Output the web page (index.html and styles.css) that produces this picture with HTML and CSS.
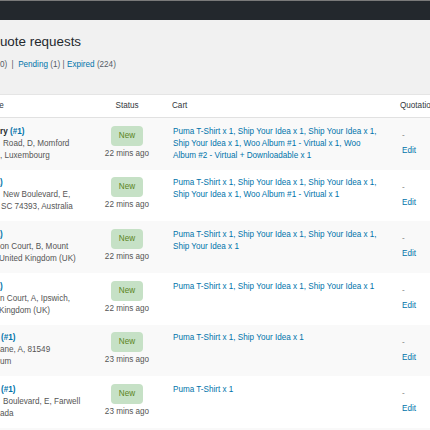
FILE: index.html
```html
<!DOCTYPE html>
<html lang="en">
<head>
<meta charset="utf-8">
<title>Quote requests</title>
<link rel="stylesheet" href="styles.css">
</head>
<body>
<div class="adminbar"></div>
<div class="head">
  <h1 class="title">Quote requests</h1>
  <ul class="filters">
    <li class="first"><span class="count">0)</span> <span class="sep">|</span></li>
    <li><a href="#">Pending</a> <span class="count">(1)</span> <span class="sep">|</span></li>
    <li><a href="#">Expired</a> <span class="count">(224)</span></li>
  </ul>
</div>
<table class="list">
  <colgroup>
    <col class="c-name"><col class="c-status"><col class="c-cart"><col class="c-quote">
  </colgroup>
  <thead>
    <tr>
      <th class="name"><span class="cut-head">Name</span></th>
      <th class="status">Status</th>
      <th class="cart">Cart</th>
      <th class="quote">Quotation</th>
    </tr>
  </thead>
  <tbody>
    <tr>
      <td class="name">
        <div class="l1"><b>ry</b> <a href="#">(#1)</a></div>
        <div class="pad3">Road, D, Momford</div>
        <div>, Luxembourg</div>
      </td>
      <td class="status"><div class="st"><span class="badge">New</span><span>22 mins ago</span></div></td>
      <td class="cart"><a href="#">Puma T-Shirt x 1, Ship Your Idea x 1, Ship Your Idea x 1, Ship Your Idea x 1, Woo Album #1 - Virtual x 1, Woo Album #2 - Virtual + Downloadable x 1</a></td>
      <td class="quote"><div class="dash">-</div><a class="edit" href="#">Edit</a></td>
    </tr>
    <tr>
      <td class="name">
        <div class="l1"><a class="cut-id" href="#">(#1)</a></div>
        <div class="pad3">New Boulevard, E,</div>
        <div class="pad1">SC 74393, Australia</div>
      </td>
      <td class="status"><div class="st"><span class="badge">New</span><span>22 mins ago</span></div></td>
      <td class="cart"><a href="#">Puma T-Shirt x 1, Ship Your Idea x 1, Ship Your Idea x 1, Ship Your Idea x 1, Woo Album #1 - Virtual x 1</a></td>
      <td class="quote"><div class="dash">-</div><a class="edit" href="#">Edit</a></td>
    </tr>
    <tr>
      <td class="name">
        <div class="l1"><a class="cut-id" href="#">(#1)</a></div>
        <div>on Court, B, Mount</div>
        <div class="neg1">United Kingdom (UK)</div>
      </td>
      <td class="status"><div class="st"><span class="badge">New</span><span>22 mins ago</span></div></td>
      <td class="cart"><a href="#">Puma T-Shirt x 1, Ship Your Idea x 1, Ship Your Idea x 1, Ship Your Idea x 1</a></td>
      <td class="quote"><div class="dash">-</div><a class="edit" href="#">Edit</a></td>
    </tr>
    <tr>
      <td class="name">
        <div class="l1"><a class="cut-id" href="#">(#1)</a></div>
        <div>n Court, A, Ipswich,</div>
        <div class="neg1">Kingdom (UK)</div>
      </td>
      <td class="status"><div class="st"><span class="badge">New</span><span>22 mins ago</span></div></td>
      <td class="cart"><a href="#">Puma T-Shirt x 1, Ship Your Idea x 1, Ship Your Idea x 1</a></td>
      <td class="quote"><div class="dash">-</div><a class="edit" href="#">Edit</a></td>
    </tr>
    <tr>
      <td class="name">
        <div class="l1 pad1"><a href="#">(#1)</a></div>
        <div>ane, A, 81549</div>
        <div>um</div>
      </td>
      <td class="status"><div class="st"><span class="badge">New</span><span>23 mins ago</span></div></td>
      <td class="cart"><a href="#">Puma T-Shirt x 1, Ship Your Idea x 1</a></td>
      <td class="quote"><div class="dash">-</div><a class="edit" href="#">Edit</a></td>
    </tr>
    <tr>
      <td class="name">
        <div class="l1 pad1"><a href="#">(#1)</a></div>
        <div class="pad3">Boulevard, E, Farwell</div>
        <div>ada</div>
      </td>
      <td class="status"><div class="st"><span class="badge">New</span><span>23 mins ago</span></div></td>
      <td class="cart"><a href="#">Puma T-Shirt x 1</a></td>
      <td class="quote"><div class="dash">-</div><a class="edit" href="#">Edit</a></td>
    </tr>
    <tr>
      <td class="name">
        <div class="l1 pad1"><a href="#">(#1)</a></div>
        <div>&nbsp;</div>
        <div>&nbsp;</div>
      </td>
      <td class="status"><div class="st"><span class="badge">New</span><span>23 mins ago</span></div></td>
      <td class="cart"><a href="#">Puma T-Shirt x 1</a></td>
      <td class="quote"><div class="dash">-</div><a class="edit" href="#">Edit</a></td>
    </tr>
  </tbody>
</table>
</body>
</html>
```

FILE: styles.css
```css
html, body {
  margin: 0;
  padding: 0;
}

body {
  width: 430px;
  height: 430px;
  overflow: hidden;
  background: #ffffff;
  font-family: "Liberation Sans", Arial, sans-serif;
  font-size: 8.15px;
  line-height: 12px;
  color: #555555;
}

a {
  color: #0073aa;
  text-decoration: none;
}

.adminbar {
  height: 19px;
  border-top: 1px solid #7a7a7a;
  background: #23282d;
}

.head {
  background: #f1f1f1;
  padding: 13px 0 23px;
}

.title {
  margin: 0 0 0 -10.5px;
  font-size: 13.4px;
  line-height: 18px;
  font-weight: 400;
  color: #23282d;
}

.filters {
  margin: 8px 0 0;
  padding: 0;
  list-style: none;
  display: flex;
  color: #555d66;
}

.filters li {
  white-space: pre;
  margin-right: 2.5px;
}

.filters .first {
  margin-right: 4.5px;
}

.filters .first .count {
  margin-right: 2px;
}

.filters .sep {
  color: #555d66;
}

.list {
  border-collapse: collapse;
  table-layout: fixed;
  width: 480px;
  border-top: 1px solid #e5e5e5;
  background: #ffffff;
}

.c-name { width: 97px; }
.c-status { width: 60px; }
.c-cart { width: 235px; }
.c-quote { width: 88px; }

.list th {
  font-weight: 400;
  color: #32373c;
  text-align: left;
  padding: 5px 0;
  line-height: 12px;
  border-bottom: 1px solid #e1e1e1;
  white-space: nowrap;
  overflow: hidden;
}

.list th.status {
  text-align: center;
}

.list th.cart {
  padding-left: 15px;
}

.list th.quote {
  padding-left: 8px;
}

.cut-head {
  margin-left: -18px;
}

.list td {
  padding: 7.5px 0 8.2px;
  vertical-align: top;
}

.list tbody tr:nth-child(odd) {
  background: #f9f9f9;
}

.list td.name {
  overflow: hidden;
  white-space: nowrap;
}

.l1 {
  font-weight: 700;
  color: #23282d;
}

.cut-id {
  margin-left: -11.7px;
}

.pad1 { padding-left: 1px; }
.pad3 { padding-left: 3px; }
.neg1 { margin-left: -1px; }

.st {
  display: flex;
  flex-direction: column;
  align-items: center;
  gap: 2px;
}

.badge {
  display: block;
  background: #c6e1c6;
  color: #5b841b;
  border-radius: 4px;
  line-height: 20px;
  padding: 0 8px;
}

.list td.cart {
  padding-left: 16px;
  padding-right: 10px;
}

.list td.quote {
  vertical-align: middle;
  padding-left: 10px;
}

.dash {
  color: #888888;
}

.edit {
  display: block;
  margin-top: 3px;
}
```
